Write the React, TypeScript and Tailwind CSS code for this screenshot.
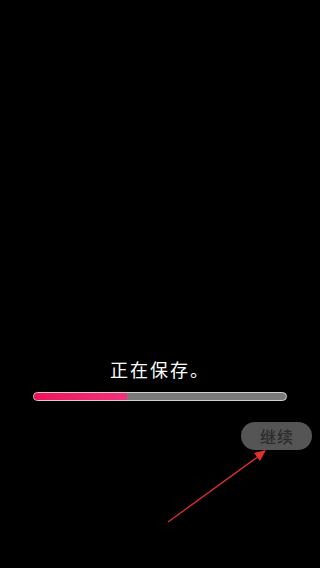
import React from "react";

export default function App() {
  return (
    <div
      className="relative w-[320px] h-[568px] bg-black overflow-hidden"
      style={{ fontFamily: '"Noto Sans CJK SC", "Noto Sans", sans-serif' }}
    >
      <div className="flex flex-col pt-[356px]">
        <div className="text-center text-white text-[18px] leading-[27px] tracking-[2px]">
          正在保存。
        </div>
        <div className="mx-[33px] mt-[9px] h-[9px] rounded-full border border-[#cfcfcf] bg-[#7a7a7a] overflow-hidden">
          <div className="h-full w-[37%] bg-gradient-to-r from-[#f0105a] to-[#f0307c]" />
        </div>
        <div className="flex justify-end pr-[8px] mt-[21px]">
          <div className="w-[71px] h-[28px] rounded-full bg-[#555555] flex items-center justify-center text-[#2c2c2c] text-[16px] font-medium tracking-[1px] pl-[1px]">
            继续
          </div>
        </div>
      </div>
      <svg className="absolute left-0 top-0" width="320" height="568">
        <line x1="168" y1="522" x2="259" y2="456" stroke="#e0302e" strokeWidth="1.3" />
        <polygon points="266,450 254,453 260,461" fill="#e0302e" />
      </svg>
    </div>
  );
}
